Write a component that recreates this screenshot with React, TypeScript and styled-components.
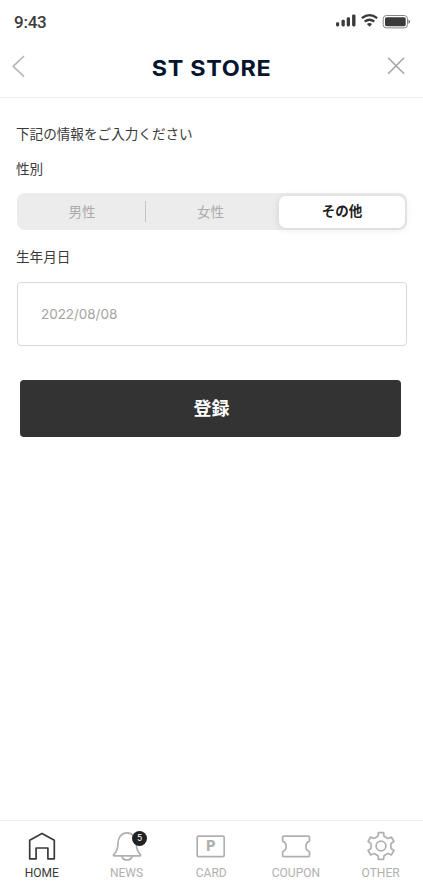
import React from 'react';
import styled, { createGlobalStyle } from 'styled-components';

const GlobalStyle = createGlobalStyle`
  * { box-sizing: border-box; }
  body { margin: 0; background: #fff; }
  button, input { font: inherit; border: 0; padding: 0; margin: 0; background: none; }
`;

const Screen = styled.div`
  width: 423px;
  height: 896px;
  display: flex;
  flex-direction: column;
  overflow: hidden;
  background: #fff;
  color: #3a3a3a;
  font-family: 'Noto Sans CJK JP', sans-serif;
`;

const StatusBar = styled.div`
  height: 42px;
  flex: none;
  display: flex;
  justify-content: space-between;
  padding: 0 12px 0 14px;
`;

const Time = styled.span`
  font: 500 17px/20px Roboto, sans-serif;
  letter-spacing: -0.25px;
  padding-top: 12px;
`;

const StatusIcons = styled.svg`
  display: block;
  margin-top: 12px;
`;

const Header = styled.header`
  height: 56px;
  flex: none;
  display: grid;
  grid-template-columns: 60px 1fr 60px;
  border-bottom: 1px solid #ededed;
`;

const HeaderButton = styled.button`
  display: block;
  height: 48px;
  svg { display: block; }
`;

const Logo = styled.svg`
  display: block;
  justify-self: center;
  margin-top: 13px;
`;

const Form = styled.main`
  flex: 1;
  display: flex;
  flex-direction: column;
  padding: 25px 16px 0;
`;

const Text = styled.p<{ $gap: number }>`
  margin: 0 0 ${(p) => p.$gap}px;
  font-size: 13.6px;
  line-height: 20px;
  height: 20px;
`;

const Segments = styled.div`
  display: grid;
  grid-template-columns: 129px 129px 1fr;
  align-items: center;
  width: 390px;
  height: 37px;
  margin: 0 0 16px 1px;
  padding-right: 2px;
  border-radius: 8px;
  background: #ececec;
`;

const Segment = styled.button<{ $selected?: boolean; $divided?: boolean }>`
  height: ${(p) => (p.$selected ? 32 : 21)}px;
  margin-left: ${(p) => (p.$selected ? 4 : 0)}px;
  padding: 0 0 ${(p) => (p.$selected ? 3 : 0)}px ${(p) => (p.$divided ? 2 : 0)}px;
  border-right: ${(p) => (p.$divided ? '1px solid #c4c4c4' : '0')};
  border-radius: ${(p) => (p.$selected ? 7 : 0)}px;
  background: ${(p) => (p.$selected ? '#fff' : 'transparent')};
  box-shadow: ${(p) => (p.$selected ? '0 1px 9px rgba(0, 0, 0, 0.11)' : 'none')};
  color: ${(p) => (p.$selected ? '#222' : '#ababab')};
  font-size: 13.5px;
  font-weight: ${(p) => (p.$selected ? 700 : 400)};
  line-height: 19px;
`;

const DateField = styled.input`
  width: 390px;
  height: 64px;
  margin: 0 0 34px 1px;
  padding: 0 23px;
  border: 1px solid #d9d9d9;
  border-radius: 4px;
  color: #a3a3a3;
  font: 400 13.5px/20px Inter, sans-serif;
  letter-spacing: -0.05px;
  outline: 0;
`;

const Submit = styled.button`
  width: 381px;
  height: 57px;
  margin-left: 4px;
  padding: 0 0 4px 2px;
  border-radius: 4px;
  background: #333;
  color: #fff;
  font-size: 18px;
  font-weight: 700;
  line-height: 26px;
`;

const Nav = styled.nav`
  height: 76px;
  flex: none;
  display: grid;
  grid-template-columns: repeat(5, 84.7px);
  margin-left: -0.5px;
  border-top: 1px solid #ededed;
`;

const NavItem = styled.button<{ $active?: boolean }>`
  display: flex;
  flex-direction: column;
  align-items: center;
  padding-top: 8px;
  color: ${(p) => (p.$active ? '#3a3a3a' : '#b0b0b0')};
`;

const NavIcon = styled.span`
  position: relative;
  display: block;
  height: 34px;
  svg { display: block; }
`;

const NavLabel = styled.span`
  margin-top: 2px;
  font: 400 12px/16px Roboto, sans-serif;
`;

const Badge = styled.span`
  position: absolute;
  top: 2px;
  left: 22.5px;
  width: 15px;
  height: 15px;
  border-radius: 50%;
  background: #222;
  color: #fff;
  font: 400 9px/15px Roboto, sans-serif;
  text-align: center;
`;

const gearTooth: Array<[number, number]> = [
  [-4.2, -9], [-2.9, -10], [-2.6, -13.4], [2.6, -13.4], [2.9, -10], [4.2, -9],
];

const gearPath =
  'M' +
  Array.from({ length: 6 }, (_, i) => {
    const a = (i * Math.PI) / 3;
    return gearTooth
      .map(
        ([x, y]) =>
          `${(17 + x * Math.cos(a) - y * Math.sin(a)).toFixed(2)} ${(17 + x * Math.sin(a) + y * Math.cos(a)).toFixed(2)}`
      )
      .join('L');
  }).join('L') +
  'Z';

const Icon = ({ children }: { children: React.ReactNode }) => (
  <svg width="34" height="34" viewBox="0 0 34 34" fill="none" stroke="currentColor" strokeWidth="1.7" strokeLinejoin="round">
    {children}
  </svg>
);

const tabs = [
  { label: 'HOME', icon: <path d="M4.7 29.8V11.3L17 4.4l12.3 6.9v18.5h-6.4V19H11.1v10.8Z" /> },
  {
    label: 'NEWS',
    badge: 5,
    icon: (
      <>
        <path d="M4 26.9q-1-.5-.3-1.2C7 22.400 7.900 19.900 7.900 14.800 7.900 8.600 11.400 3.900 17 3.900s9.300 4.700 9.300 10.900c0 5.100.9 7.600 4.200 10.900q.5.900-.4 1.200Z" />
        <path d="M11.8 27c.5 2.500 2.500 4 5.200 4s4.700-1.500 5.200-4" />
      </>
    ),
  },
  {
    label: 'CARD',
    icon: (
      <>
        <rect x="3.2" y="7.2" width="27" height="20.5" rx="1.5" />
        <text x="16.8" y="22.2" textAnchor="middle" fill="currentColor" stroke="none" fontFamily="Inter, sans-serif" fontWeight="800" fontSize="14">P</text>
      </>
    ),
  },
  {
    label: 'COUPON',
    icon: <path d="M4.900 7.200h24.300q1.300 0 1.300 1.300v3.600c-4.800 2-4.800 8.600 0 10.600v3.700q0 1.300-1.300 1.300H4.900q-1.300 0-1.300-1.300v-3.700c4.800-2 4.800-8.600 0-10.600V8.500q0-1.300 1.300-1.300Z" />,
  },
  {
    label: 'OTHER',
    icon: (
      <>
        <path d={gearPath} />
        <circle cx="17" cy="17" r="4.9" />
      </>
    ),
  },
];

export default function App() {
  return (
    <Screen>
      <GlobalStyle />
      <StatusBar>
        <Time>9:43</Time>
        <StatusIcons width="75" height="18" viewBox="0 0 75 18" fill="#3a3a3a">
          <rect x="0" y="10.2" width="3.2" height="4.2" rx="1.3" />
          <rect x="5.5" y="7.7" width="3.3" height="6.7" rx="1.3" />
          <rect x="10.7" y="5.2" width="3.3" height="9.2" rx="1.3" />
          <rect x="16.1" y="2.4" width="3.4" height="12" rx="1.3" />
          <g fill="none" stroke="#3a3a3a" strokeWidth="2.3">
            <path d="M25.800 6.200q7.700-6.200 15.400 0" />
            <path d="M28.700 9.600q4.800-3.800 9.600 0" />
          </g>
          <path d="M30.900 12.100q2.600-2 5.200 0l-2.600 2.700Z" />
          <rect x="47.2" y="3.5" width="24.3" height="12.4" rx="3.3" fill="none" stroke="#858585" strokeWidth="1" />
          <rect x="49" y="5.2" width="20.7" height="9" rx="1.6" />
          <path d="M72.6 7.500q2.400 2.200 0 4.500Z" />
        </StatusIcons>
      </StatusBar>
      <Header>
        <HeaderButton aria-label="戻る">
          <svg width="40" height="48" fill="none" stroke="#b5b5b5" strokeWidth="1.6">
            <path d="M24 14 13.200 24.300 24 34.700" />
          </svg>
        </HeaderButton>
        <Logo width="124" height="28" viewBox="0 0 124 28" role="img">
          <text x="1.8" y="21.2" textLength="119.5" lengthAdjust="spacingAndGlyphs" fill="#06152f" fontFamily="Inter, sans-serif" fontWeight="700" fontSize="21.5" letterSpacing="0.6">ST STORE</text>
        </Logo>
        <HeaderButton aria-label="閉じる">
          <svg width="60" height="48" fill="none" stroke="#a5a5a5" strokeWidth="1.6">
            <path d="m25.100 15.800 16 16m0-16-16 16" />
          </svg>
        </HeaderButton>
      </Header>
      <Form>
        <Text $gap={15}>下記の情報をご入力ください</Text>
        <Text $gap={15}>性別</Text>
        <Segments>
          <Segment $divided>男性</Segment>
          <Segment>女性</Segment>
          <Segment $selected>その他</Segment>
        </Segments>
        <Text $gap={16}>生年月日</Text>
        <DateField defaultValue="2022/08/08" />
        <Submit>登録</Submit>
      </Form>
      <Nav>
        {tabs.map((tab, i) => (
          <NavItem key={tab.label} $active={i === 0}>
            <NavIcon>
              <Icon>{tab.icon}</Icon>
              {tab.badge && <Badge>{tab.badge}</Badge>}
            </NavIcon>
            <NavLabel>{tab.label}</NavLabel>
          </NavItem>
        ))}
      </Nav>
    </Screen>
  );
}
